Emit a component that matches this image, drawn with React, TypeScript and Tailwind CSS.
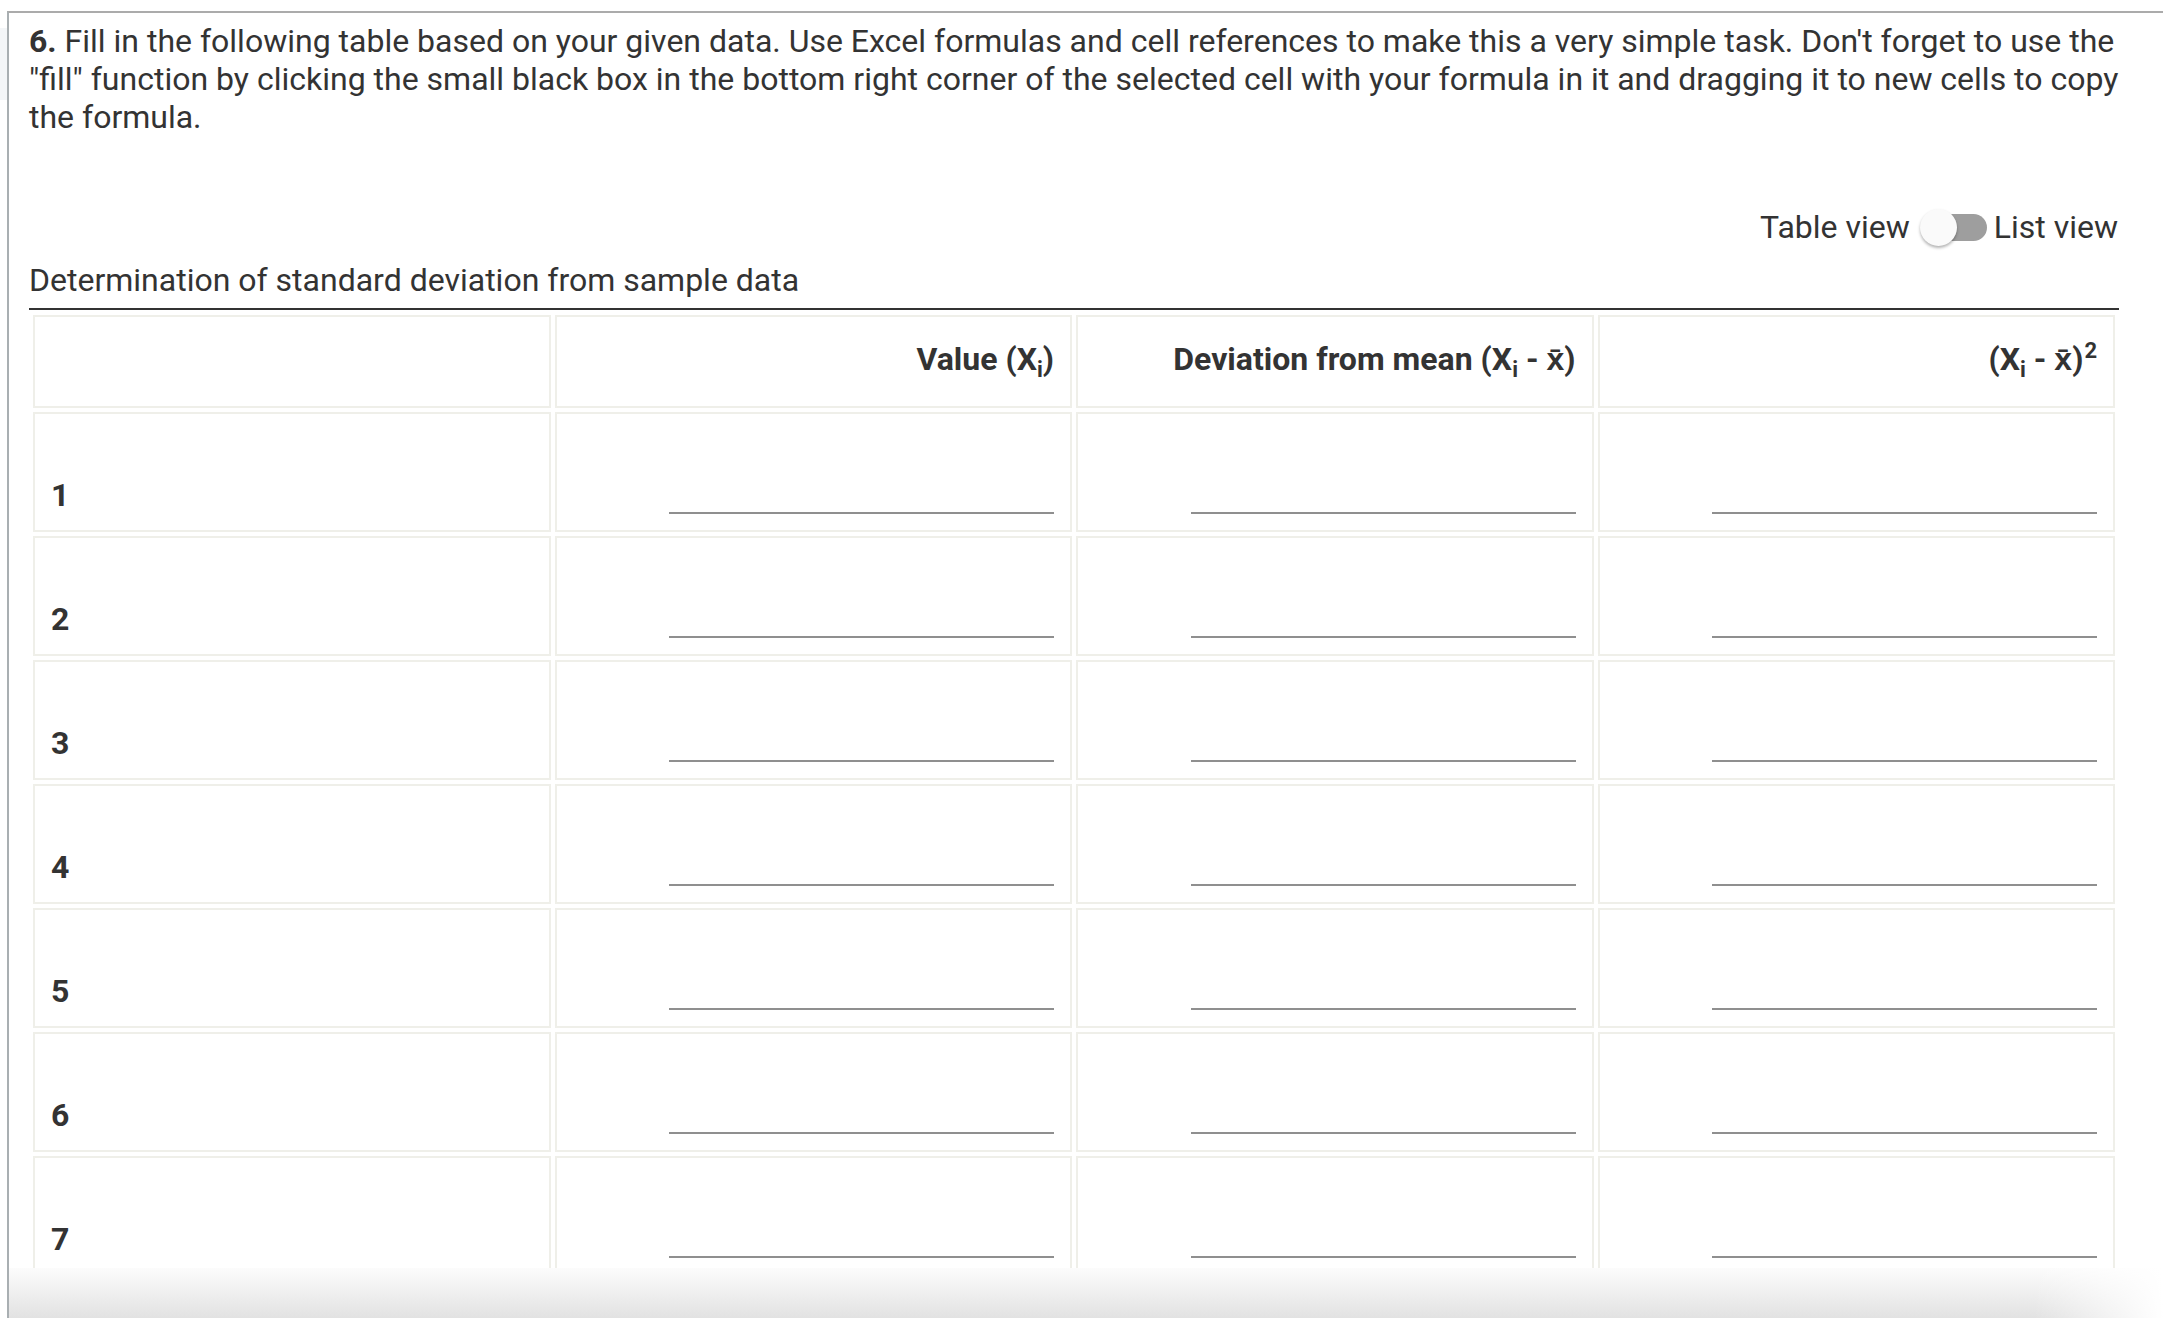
import React from "react";

const Sub = ({ children }: { children: React.ReactNode }) => (
  <span className="text-[22px] relative top-[7px] leading-none">{children}</span>
);
const Sup = ({ children }: { children: React.ReactNode }) => (
  <span className="text-[22px] relative top-[-12px] leading-none ml-[1px]">{children}</span>
);

function Blank() {
  return <div className="w-[385px] h-[40px] border-b-2 border-[#8f8f8f]" />;
}

export default function App() {
  const rows = [1, 2, 3, 4, 5, 6, 7];
  return (
    <div className="h-[1318px] w-full flex overflow-hidden bg-white font-['Roboto',sans-serif] text-[#333333]">
      <div className="w-[7px] shrink-0 flex flex-col">
        <div className="h-[28px]" />
        <div className="h-[72px] bg-[#f4f6f8]" />
      </div>
      <div className="flex-1 min-w-0 mt-[11px] border-t-2 border-l-2 border-t-[#ababab] border-l-[#a9afb2] flex flex-col">
        <div className="flex-1 min-h-0 overflow-hidden pl-[20px] pr-[44px]">
          <p className="pt-[9px] text-[32px] leading-[38px]">
            <b className="font-bold">6.</b> Fill in the following table based on your given data. Use Excel formulas and
            cell references to make this a very simple task. Don't forget to use the "fill" function by clicking the
            small black box in the bottom right corner of the selected cell with your formula in it and dragging it to
            new cells to copy the formula.
          </p>
          <div className="mt-[72px] h-[38px] flex items-center justify-end pr-[1px] text-[32px]">
            <span>Table view</span>
            <div className="relative ml-[10px] mr-[7px] w-[67px] h-[37px]">
              <div className="absolute left-[4px] top-[5px] w-[63px] h-[27px] rounded-full bg-[#9e9e9e]" />
              <div className="absolute left-0 top-0 w-[37px] h-[37px] rounded-full bg-[#fafafa] shadow-[0_2px_3px_rgba(0,0,0,0.3)]" />
            </div>
            <span>List view</span>
          </div>
          <div className="mt-[15px] h-[38px] text-[32px] leading-[38px]">
            Determination of standard deviation from sample data
          </div>
          <div className="mt-[9px] border-b-2 border-[#333333]" />
          <div className="pt-[5px] px-[4px] grid grid-cols-4 gap-[4px] text-[32px] leading-[38px]">
            <div className="h-[93px] border-2 border-[#efefe9]" />
            <div className="h-[93px] border-2 border-[#efefe9] px-[16px] pt-[16px] pb-[22px] flex items-center justify-end font-bold">
              <span>
                Value (X<Sub>i</Sub>)
              </span>
            </div>
            <div className="h-[93px] border-2 border-[#efefe9] px-[16px] pt-[16px] pb-[22px] flex items-center justify-end font-bold">
              <span>
                Deviation from mean (X<Sub>i</Sub> - x̄)
              </span>
            </div>
            <div className="h-[93px] border-2 border-[#efefe9] px-[16px] pt-[16px] pb-[22px] flex items-center justify-end font-bold">
              <span>
                (X<Sub>i</Sub> - x̄)<Sup>2</Sup>
              </span>
            </div>
            {rows.map((r) => (
              <React.Fragment key={r}>
                <div className="h-[120px] border-2 border-[#efefe9] p-[16px] flex items-end font-bold">
                  <span>{r}</span>
                </div>
                <div className="h-[120px] border-2 border-[#efefe9] p-[16px] flex items-end justify-end">
                  <Blank />
                </div>
                <div className="h-[120px] border-2 border-[#efefe9] p-[16px] flex items-end justify-end">
                  <Blank />
                </div>
                <div className="h-[120px] border-2 border-[#efefe9] p-[16px] flex items-end justify-end">
                  <Blank />
                </div>
              </React.Fragment>
            ))}
          </div>
        </div>
        <div className="h-[50px] shrink-0 bg-[linear-gradient(to_right,rgba(255,255,255,0)_94%,#ffffff),linear-gradient(to_bottom,#fcfcfc,#e2e2e2)]" />
      </div>
    </div>
  );
}
